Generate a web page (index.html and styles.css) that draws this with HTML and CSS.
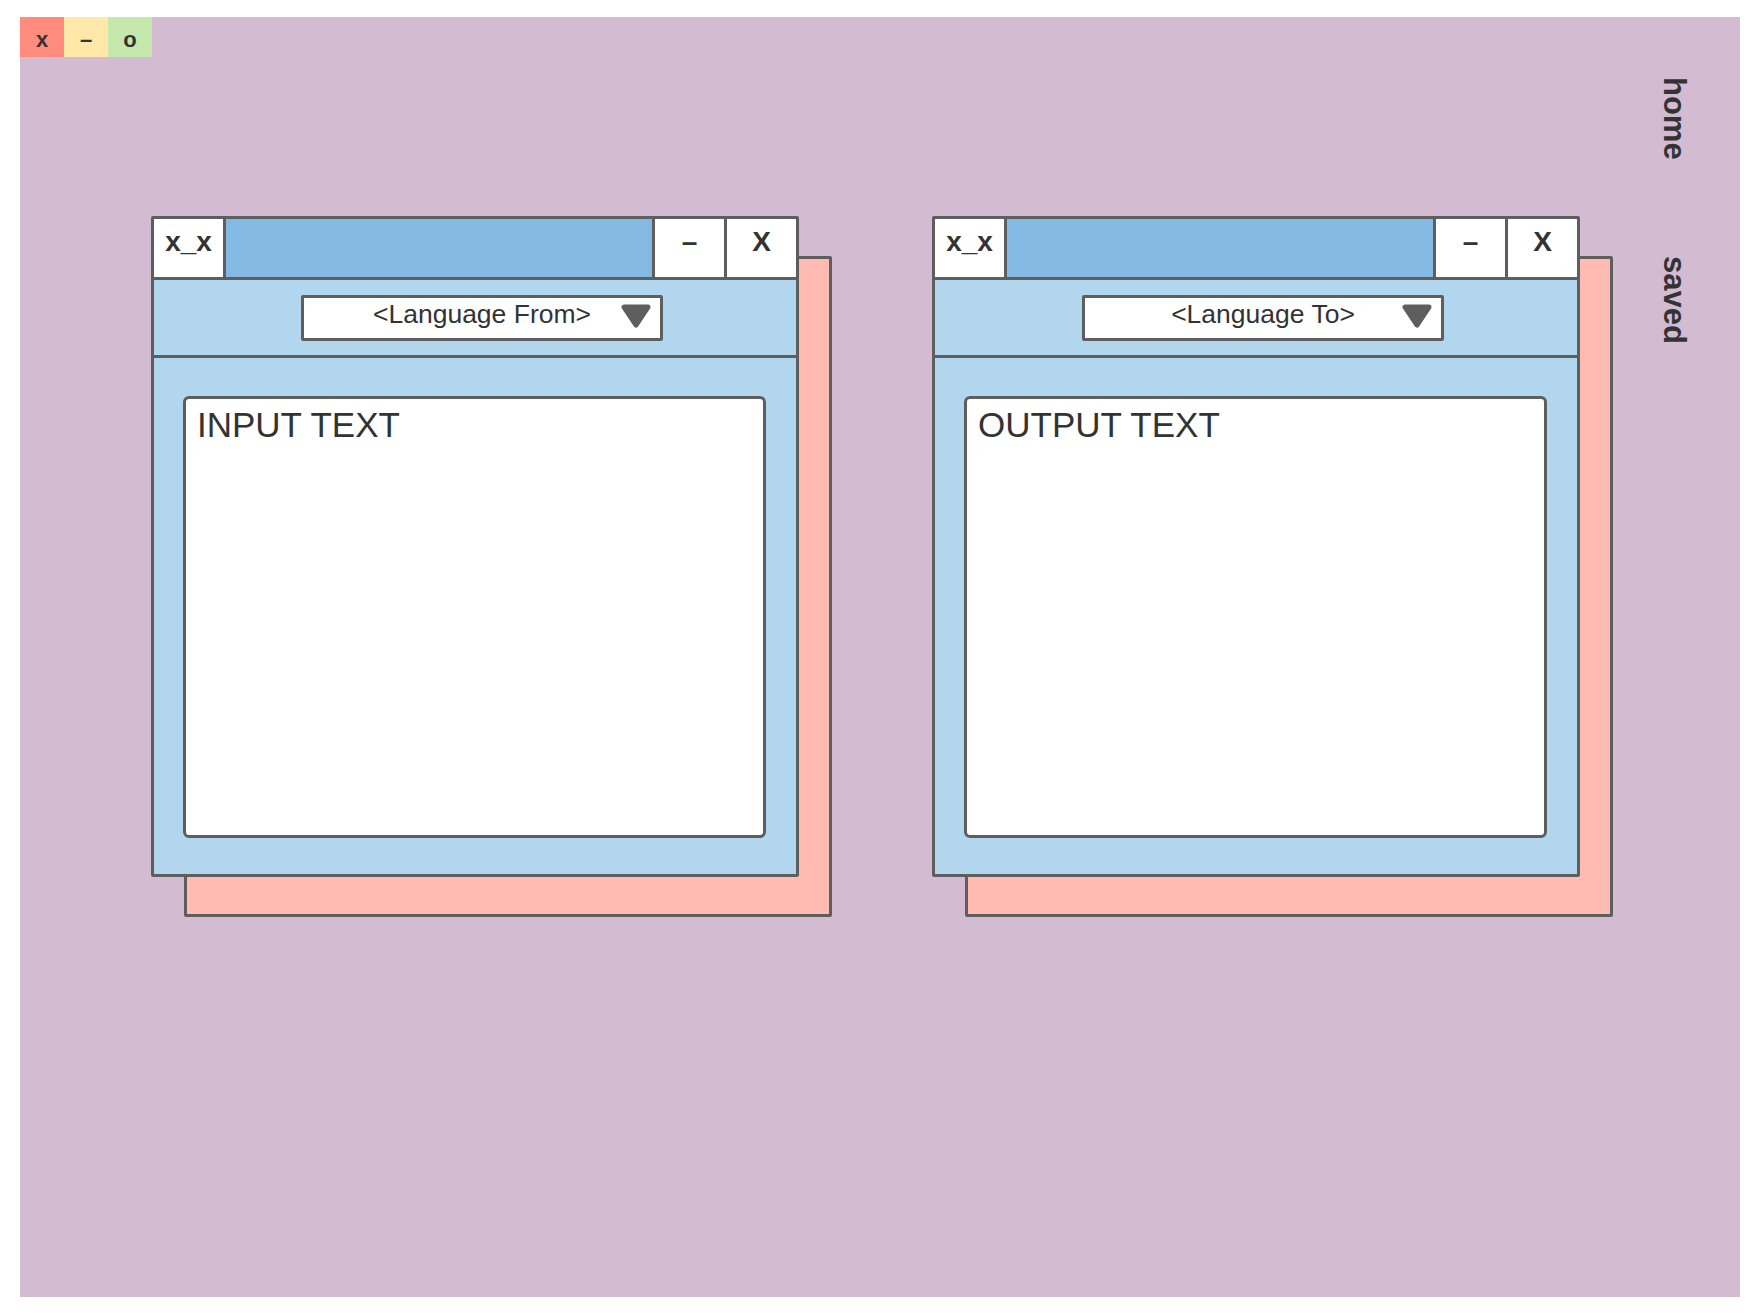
FILE: index.html
```html
<!DOCTYPE html>
<html lang="en">
<head>
<meta charset="utf-8">
<title>Translator</title>
<link rel="stylesheet" href="styles.css">
</head>
<body>
<div class="screen">
  <div class="topbar">
    <span class="tb tb-close">x</span><span class="tb tb-min">–</span><span class="tb tb-max">o</span>
  </div>
  <div class="main">
    <div class="windows">
      <section class="window">
        <div class="titlebar">
          <div class="tcell tcell-icon">x_x</div>
          <div class="tfill"></div>
          <div class="tcell tcell-btn">–</div>
          <div class="tcell tcell-btn">X</div>
        </div>
        <div class="toolbar">
          <div class="dropdown">
            <span class="dd-label">&lt;Language From&gt;</span>
            <svg class="caret" viewBox="0 0 30 24" width="30" height="24"><polygon points="3,3 27,3 15,21" /></svg>
          </div>
        </div>
        <div class="wbody">
          <div class="textbox">INPUT TEXT</div>
        </div>
      </section>
      <section class="window">
        <div class="titlebar">
          <div class="tcell tcell-icon">x_x</div>
          <div class="tfill"></div>
          <div class="tcell tcell-btn">–</div>
          <div class="tcell tcell-btn">X</div>
        </div>
        <div class="toolbar">
          <div class="dropdown">
            <span class="dd-label">&lt;Language To&gt;</span>
            <svg class="caret" viewBox="0 0 30 24" width="30" height="24"><polygon points="3,3 27,3 15,21" /></svg>
          </div>
        </div>
        <div class="wbody">
          <div class="textbox">OUTPUT TEXT</div>
        </div>
      </section>
    </div>
    <nav class="sidenav">
      <span class="navlink">home</span>
      <span class="navlink">saved</span>
    </nav>
  </div>
</div>
</body>
</html>
```

FILE: styles.css
```css
* { box-sizing: border-box; }

html, body {
  margin: 0;
  background: #ffffff;
}

body {
  padding: 17px 20px 16px 20px;
  font-family: "Liberation Sans", Arial, sans-serif;
  color: #333333;
}

.screen {
  width: 1720px;
  height: 1280px;
  background: #d3bbd2;
  display: flex;
  flex-direction: column;
}

.topbar {
  display: flex;
  height: 40px;
}

.tb {
  width: 44px;
  height: 40px;
  display: flex;
  align-items: center;
  justify-content: center;
  padding-top: 5px;
  font-size: 22px;
  font-weight: bold;
  line-height: 1;
}

.tb-close { background: #ff8c7d; }
.tb-min { background: #ffe8a8; }
.tb-max { background: #c7e8ac; }

.main {
  display: flex;
  align-items: flex-start;
}

.windows {
  display: flex;
  gap: 133px;
  margin-left: 131px;
  margin-top: 159px;
}

.window {
  width: 648px;
  border: 3px solid #5e5e5e;
  border-radius: 2px;
  background: #b3d6ef;
  display: flex;
  flex-direction: column;
  box-shadow: 33px 40px 0 -3px #ffbbb1, 33px 40px 0 0 #5e5e5e;
}

.titlebar {
  display: flex;
  height: 61px;
  border-bottom: 3px solid #5e5e5e;
  background: #83b9e3;
}

.tcell {
  width: 72px;
  background: #ffffff;
  display: flex;
  align-items: center;
  justify-content: center;
  padding-bottom: 12px;
  font-size: 28px;
  font-weight: bold;
  line-height: 1;
}

.tcell-icon {
  border-right: 3px solid #5e5e5e;
}

.tcell-btn {
  border-left: 3px solid #5e5e5e;
}

.tfill {
  flex: 1;
}

.toolbar {
  height: 78px;
  border-bottom: 3px solid #5e5e5e;
  display: flex;
  align-items: center;
  padding-left: 147px;
}

.dropdown {
  position: relative;
  width: 362px;
  height: 46px;
  background: #ffffff;
  border: 3px solid #5e5e5e;
  border-radius: 2px;
  display: flex;
  align-items: center;
  justify-content: center;
}

.dd-label {
  font-size: 26.5px;
  line-height: 1;
  padding-bottom: 6px;
}

.caret {
  position: absolute;
  right: 9px;
  top: 6px;
  fill: #5e5e5e;
  stroke: #5e5e5e;
  stroke-width: 5;
  stroke-linejoin: round;
}

.wbody {
  padding: 38px 30px 36px 29px;
}

.textbox {
  height: 442px;
  background: #ffffff;
  border: 3px solid #5e5e5e;
  border-radius: 6px;
  padding: 8px 11px;
  font-size: 35px;
  line-height: 1;
}

.sidenav {
  margin-left: auto;
  margin-right: 50px;
  margin-top: 20px;
  display: flex;
  flex-direction: column;
  gap: 96px;
}

.navlink {
  writing-mode: vertical-rl;
  font-size: 31px;
  font-weight: bold;
  line-height: 1;
}
```
